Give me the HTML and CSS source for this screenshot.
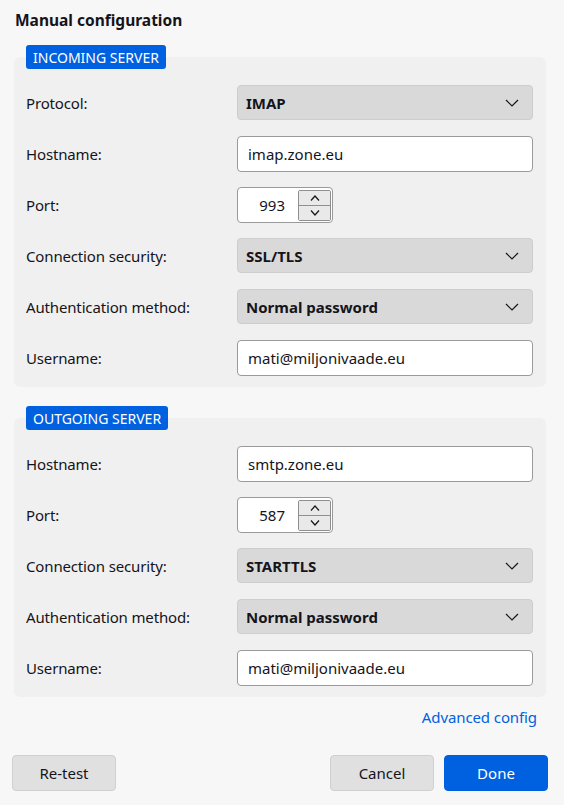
FILE: index.html
```html
<!DOCTYPE html>
<html lang="en">
<head>
    <meta charset="UTF-8">
    <meta name="viewport" content="width=device-width, initial-scale=1.0">
    <title>Manual configuration</title>
    <link rel="stylesheet" href="styles.css">
</head>
<body>
    <main class="config">
        <h1 class="title">Manual configuration</h1>

        <section class="server">
            <span class="badge">INCOMING SERVER</span>
            <div class="row">
                <label>Protocol:</label>
                <div class="select"><span>IMAP</span>
                    <svg width="14" height="8" viewBox="0 0 14 8"><path d="M1 1l6 6 6-6" fill="none" stroke="#15141a" stroke-width="1.2"/></svg>
                </div>
            </div>
            <div class="row">
                <label for="inHost">Hostname:</label>
                <input type="text" id="inHost" class="text" value="imap.zone.eu">
            </div>
            <div class="row">
                <label>Port:</label>
                <div class="port">
                    <span class="port-value">993</span>
                    <div class="spin">
                        <button class="spin-btn"><svg width="10" height="6" viewBox="0 0 10 6"><path d="M1 5.5l4-4.5 4 4.5" fill="none" stroke="#15141a" stroke-width="1.2"/></svg></button>
                        <button class="spin-btn"><svg width="10" height="6" viewBox="0 0 10 6"><path d="M1 .5l4 4.5 4-4.5" fill="none" stroke="#15141a" stroke-width="1.2"/></svg></button>
                    </div>
                </div>
            </div>
            <div class="row">
                <label>Connection security:</label>
                <div class="select"><span>SSL/TLS</span>
                    <svg width="14" height="8" viewBox="0 0 14 8"><path d="M1 1l6 6 6-6" fill="none" stroke="#15141a" stroke-width="1.2"/></svg>
                </div>
            </div>
            <div class="row">
                <label>Authentication method:</label>
                <div class="select"><span>Normal password</span>
                    <svg width="14" height="8" viewBox="0 0 14 8"><path d="M1 1l6 6 6-6" fill="none" stroke="#15141a" stroke-width="1.2"/></svg>
                </div>
            </div>
            <div class="row">
                <label for="inUser">Username:</label>
                <input type="text" id="inUser" class="text" value="mati@miljonivaade.eu">
            </div>
        </section>

        <section class="server">
            <span class="badge">OUTGOING SERVER</span>
            <div class="row">
                <label for="outHost">Hostname:</label>
                <input type="text" id="outHost" class="text" value="smtp.zone.eu">
            </div>
            <div class="row">
                <label>Port:</label>
                <div class="port">
                    <span class="port-value">587</span>
                    <div class="spin">
                        <button class="spin-btn"><svg width="10" height="6" viewBox="0 0 10 6"><path d="M1 5.5l4-4.5 4 4.5" fill="none" stroke="#15141a" stroke-width="1.2"/></svg></button>
                        <button class="spin-btn"><svg width="10" height="6" viewBox="0 0 10 6"><path d="M1 .5l4 4.5 4-4.5" fill="none" stroke="#15141a" stroke-width="1.2"/></svg></button>
                    </div>
                </div>
            </div>
            <div class="row">
                <label>Connection security:</label>
                <div class="select"><span>STARTTLS</span>
                    <svg width="14" height="8" viewBox="0 0 14 8"><path d="M1 1l6 6 6-6" fill="none" stroke="#15141a" stroke-width="1.2"/></svg>
                </div>
            </div>
            <div class="row">
                <label>Authentication method:</label>
                <div class="select"><span>Normal password</span>
                    <svg width="14" height="8" viewBox="0 0 14 8"><path d="M1 1l6 6 6-6" fill="none" stroke="#15141a" stroke-width="1.2"/></svg>
                </div>
            </div>
            <div class="row">
                <label for="outUser">Username:</label>
                <input type="text" id="outUser" class="text" value="mati@miljonivaade.eu">
            </div>
        </section>

        <div class="advanced"><a href="#">Advanced config</a></div>

        <div class="actions">
            <button class="btn">Re-test</button>
            <span class="spacer"></span>
            <button class="btn">Cancel</button>
            <button class="btn primary">Done</button>
        </div>
    </main>
</body>
</html>
```

FILE: styles.css
```css
body {
    margin: 0;
    background-color: #f7f7f7;
    color: #15141a;
    font-family: "Noto Sans", "Open Sans", sans-serif;
    font-size: 15px;
}
.config {
    padding: 9px 18px 14px 14px;
}
.title {
    margin: 0 0 26px 1px;
    font-size: 15.5px;
    line-height: 22px;
    font-weight: bold;
}
.server {
    display: flex;
    flex-direction: column;
    gap: 16px;
    padding: 0 13px 12px 12px;
    background-color: #f0f0f0;
    border-radius: 6px;
}
.server + .server {
    margin-top: 31px;
}
.badge {
    align-self: flex-start;
    margin-top: -12px;
    padding: 1px 7px 0;
    height: 24px;
    box-sizing: border-box;
    line-height: 23px;
    font-size: 14px;
    color: white;
    background-color: #0061e0;
    border-radius: 3px;
}
.row {
    display: grid;
    grid-template-columns: 211px 1fr;
    align-items: center;
    height: 35px;
}
.row label {
    letter-spacing: -0.15px;
}
.select {
    display: flex;
    align-items: center;
    justify-content: space-between;
    height: 35px;
    box-sizing: border-box;
    padding: 0 13px 0 8px;
    background-color: #d9d9d9;
    border: 1px solid #cdcdcd;
    border-radius: 4px;
    font-weight: bold;
}
.text {
    height: 36px;
    box-sizing: border-box;
    padding: 0 10px;
    border: 1px solid #9a9a9a;
    border-radius: 4px;
    background: white;
    color: #15141a;
    font-family: inherit;
    font-size: 15px;
}
.port {
    display: flex;
    align-items: center;
    width: 96px;
    height: 36px;
    box-sizing: border-box;
    padding: 1px 1px 1px 0;
    background: white;
    border: 1px solid #9a9a9a;
    border-radius: 4px;
}
.port-value {
    flex: 1;
    text-align: right;
    padding-right: 13px;
}
.spin {
    display: flex;
    flex-direction: column;
    width: 33px;
    height: 31px;
    border: 1px solid #8f8f8f;
    border-radius: 2px;
    box-sizing: border-box;
    overflow: hidden;
}
.spin-btn {
    flex: 1;
    display: flex;
    align-items: center;
    justify-content: center;
    padding: 0;
    border: none;
    background-color: #e9e9e9;
}
.spin-btn + .spin-btn {
    border-top: 1px solid #8f8f8f;
}
.advanced {
    display: flex;
    justify-content: flex-end;
    margin: 10px 9px 0 0;
    line-height: 20px;
}
.advanced a {
    color: #0061e0;
    text-decoration: none;
    letter-spacing: -0.1px;
}
.actions {
    display: flex;
    gap: 10px;
    margin: 28px -2px 0 -2px;
}
.spacer {
    flex: 1;
}
.btn {
    width: 104px;
    height: 36px;
    border: 1px solid #d0d0d0;
    border-radius: 4px;
    background-color: #e0e0e0;
    color: #15141a;
    font-family: inherit;
    font-size: 15px;
}
.btn.primary {
    background-color: #0061e0;
    border-color: #0061e0;
    color: white;
}
```
